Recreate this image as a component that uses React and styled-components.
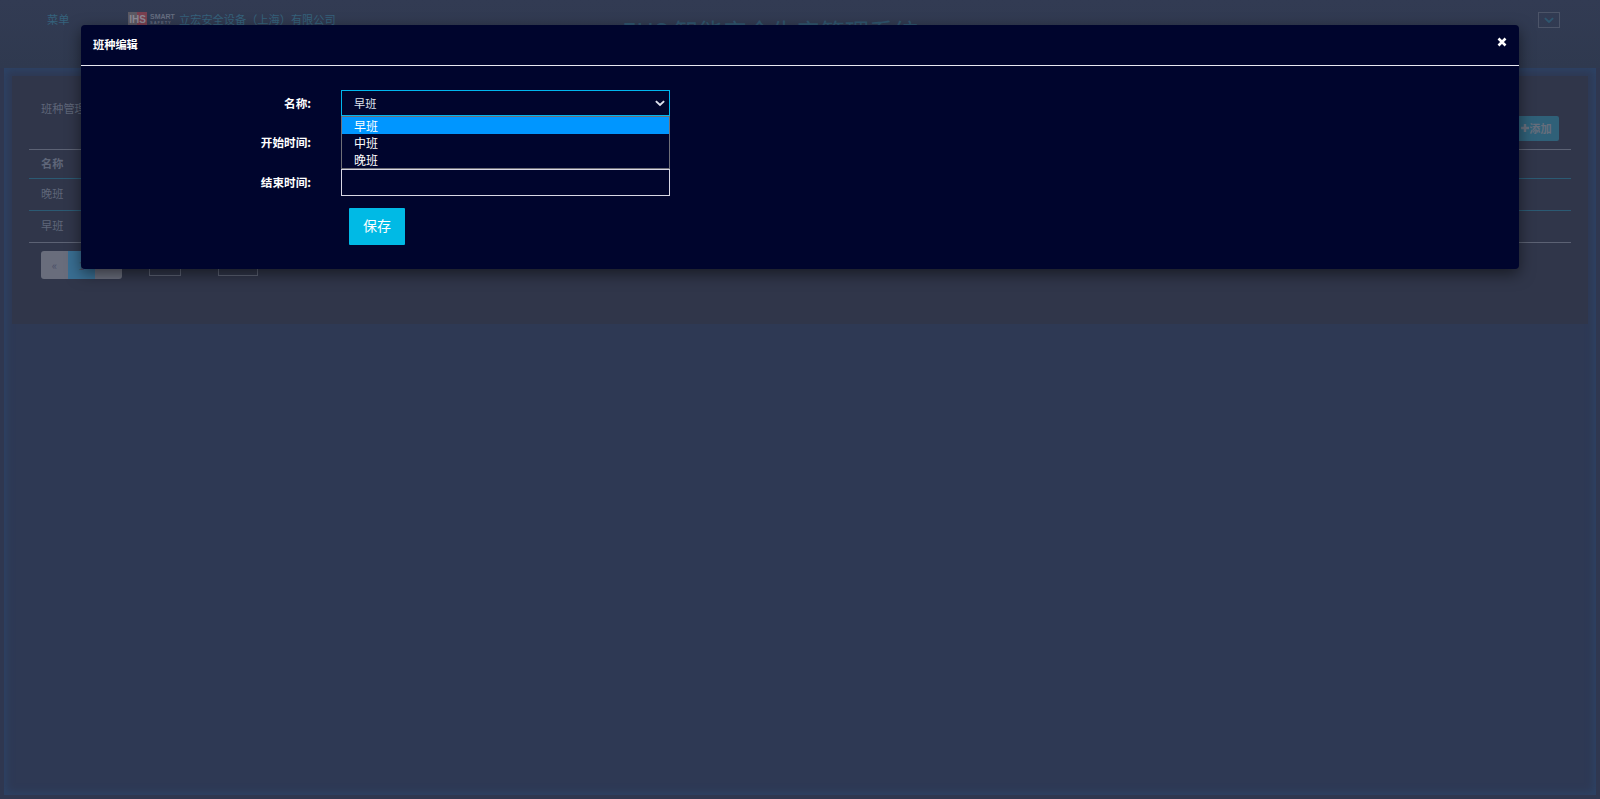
import styled, { createGlobalStyle } from "styled-components";

const GlobalStyle = createGlobalStyle`
  html, body {
    margin: 0;
    padding: 0;
    height: 100%;
    overflow: hidden;
  }

  body {
    background: #2f3750;
    font-family: "Noto Sans CJK SC", "Liberation Sans", sans-serif;
    font-size: 11.2px;
  }
`;

const Page = styled.div`
  position: relative;
  height: 799px;
  display: flex;
  flex-direction: column;
`;

const TopBar = styled.header`
  height: 68px;
  flex: none;
  display: flex;
  align-items: flex-start;
  padding: 11px 40px 0 47px;
  box-sizing: border-box;
  background: linear-gradient(#323b53, #2f394f);
  color: #35627c;
`;

const MenuLink = styled.a`
  width: 81px;
  line-height: 17px;
`;

const Logo = styled.div`
  display: flex;
  align-items: flex-start;
  gap: 3px;
  height: 16px;
  width: 51px;
  margin-top: 1px;
`;

const LogoMark = styled.span`
  width: 19px;
  height: 16px;
  background: linear-gradient(90deg, #5c5a64 50%, #7a4050 50%);
  color: #8d8a96;
  font: bold 10px/16px "Liberation Sans", sans-serif;
  text-align: center;
`;

const LogoWords = styled.span`
  display: flex;
  flex-direction: column;
  width: 26px;
  padding-top: 1px;
  font: bold 7px/7px "Liberation Sans", sans-serif;
  color: #656d80;
`;

const LogoSubWord = styled.span`
  font-size: 4px;
  line-height: 5px;
  letter-spacing: 1px;
`;

const Company = styled.span`
  width: 443px;
  line-height: 17px;
  white-space: nowrap;
`;

const SystemName = styled.h1`
  margin: 2px 0 0;
  width: 916px;
  font-size: 24.4px;
  font-weight: 400;
  line-height: 36px;
  color: #2f566f;
  white-space: nowrap;
`;

const ToggleBox = styled.button`
  width: 22px;
  height: 16px;
  margin-top: 1px;
  padding: 0;
  display: flex;
  align-items: center;
  justify-content: center;
  background: none;
  border: 1px solid #4c5468;
`;

const Frame = styled.main`
  flex: 1;
  margin: 0 4px 4px;
  padding: 8px;
  background: #2e3954;
  box-shadow: inset 0 0 8px 2px #2d4468;
`;

const Panel = styled.section`
  height: 248px;
  box-sizing: border-box;
  padding: 23px 17px 0;
  background: #30364a;
  color: #5f6679;
`;

const PanelHead = styled.div`
  display: flex;
  justify-content: space-between;
  padding: 0 12px;
  height: 50px;
  line-height: 18px;
`;

const AddButton = styled.button`
  width: 50px;
  height: 25px;
  margin-top: 17px;
  padding: 0 0 2px 5px;
  display: flex;
  align-items: center;
  justify-content: center;
  border: 0;
  border-radius: 2px;
  background: #2f6078;
  color: #666e7c;
  font: bold 11.2px "Noto Sans CJK SC", sans-serif;
`;

const Table = styled.div`
  border-top: 1px solid #5c6274;
  border-bottom: 1px solid #5c6274;
`;

const TableRow = styled.div`
  height: ${(p) => (p.$head ? 28 : 31)}px;
  padding-left: 12px;
  line-height: ${(p) => (p.$head ? 26 : 29)}px;
  font-weight: ${(p) => (p.$head ? 700 : 400)};
  border-bottom: 1px solid #2b5a73;

  &:last-child {
    border-bottom: 0;
  }
`;

const Pager = styled.div`
  display: flex;
  align-items: flex-end;
  margin: 8px 0 0 12px;
`;

const PageButtons = styled.div`
  display: flex;
  width: 81px;
  height: 28px;
  border-radius: 3px;
  overflow: hidden;
`;

const PageButton = styled.span`
  flex: 1;
  text-align: center;
  line-height: 28px;
  background: ${(p) => (p.$active ? "#396e92" : "#696d7c")};
  color: #4a4f68;
`;

const PagerInput = styled.span`
  display: block;
  width: ${(p) => p.$width}px;
  height: 24px;
  box-sizing: border-box;
  margin-bottom: 3px;
  border: 1px solid #5c6274;
`;

const PagerText = styled.span`
  width: ${(p) => p.$width}px;
  margin-bottom: 7px;
  text-align: center;
  line-height: 18px;
  color: #2c5a72;
  white-space: nowrap;
`;

const Dialog = styled.div`
  position: absolute;
  left: 81px;
  top: 25px;
  width: 1438px;
  height: 244px;
  border-radius: 4px;
  background: #00052d;
  box-shadow: 0 5px 15px rgba(0, 0, 0, 0.5);
  color: #fff;
`;

const DialogHead = styled.div`
  height: 40px;
  display: flex;
  justify-content: space-between;
  padding: 0 12px;
  border-bottom: 1px solid #e8e8f0;
`;

const DialogTitle = styled.h4`
  margin: 0;
  font-size: 11.2px;
  line-height: 38px;
`;

const CloseButton = styled.button`
  height: 34px;
  padding: 0;
  background: none;
  border: 0;
  display: flex;
  align-items: center;
`;

const Form = styled.form`
  display: flex;
  flex-direction: column;
  gap: 13px;
  padding-top: 24px;
`;

const Field = styled.div`
  display: flex;
  align-items: center;
  position: relative;
`;

const Label = styled.label`
  width: 230px;
  margin-right: 30px;
  padding-bottom: ${(p) => (p.$select ? 0 : 2)}px;
  text-align: right;
  font-size: 11.6px;
  font-weight: 700;
`;

const SelectBox = styled.div`
  width: 329px;
  height: 26px;
  box-sizing: border-box;
  padding: 0 3px 0 12px;
  display: flex;
  align-items: center;
  justify-content: space-between;
  border: 1px solid #00b7ee;
  color: #dfe3ee;
`;

const TextInput = styled.input`
  width: 329px;
  height: 27px;
  box-sizing: border-box;
  border: 1px solid #d8d8e4;
  background: transparent;
`;

const OptionList = styled.ul`
  position: absolute;
  left: 260px;
  top: 26px;
  width: 329px;
  box-sizing: border-box;
  margin: 0;
  padding: 0;
  list-style: none;
  background: #00052d;
  border: 1px solid #6f7078;
  z-index: 2;
`;

const Option = styled.li`
  height: 17px;
  padding-left: 12px;
  line-height: 17px;
  font-size: 12px;
  background: ${(p) => (p.$selected ? "#0096ff" : "transparent")};
`;

const SaveButton = styled.button`
  align-self: flex-start;
  width: 56px;
  height: 37px;
  margin: -1px 0 0 268px;
  padding: 0 0 3px;
  border: 0;
  border-radius: 1px;
  background: #00bae5;
  color: #fff;
  font: 14px "Noto Sans CJK SC", sans-serif;
`;

const Chevron = ({ color, size }) => (
  <svg width={size} height={size} viewBox="0 0 16 16" fill="none">
    <path d="M2.5 5.5 8 10.5 13.5 5.5" stroke={color} strokeWidth="2.6" />
  </svg>
);

const shiftNames = ["早班", "中班", "晚班"];

export default function App() {
  return (
    <Page>
      <GlobalStyle />
      <TopBar>
        <MenuLink>菜单</MenuLink>
        <Logo>
          <LogoMark>IHS</LogoMark>
          <LogoWords>
            SMART
            <LogoSubWord>SAFETY</LogoSubWord>
          </LogoWords>
        </Logo>
        <Company>立宏安全设备（上海）有限公司</Company>
        <SystemName>EHS 智能安全生产管理系统</SystemName>
        <ToggleBox>
          <Chevron color="#2f566f" size={12} />
        </ToggleBox>
      </TopBar>
      <Frame>
        <Panel>
          <PanelHead>
            <span>班种管理</span>
            <AddButton>
              <svg width="8" height="8" viewBox="0 0 8 8">
                <path d="M4 0V8M0 4H8" stroke="#666e7c" strokeWidth="2.4" />
              </svg>
              添加
            </AddButton>
          </PanelHead>
          <Table>
            <TableRow $head>名称</TableRow>
            <TableRow>晚班</TableRow>
            <TableRow>早班</TableRow>
          </Table>
          <Pager>
            <PageButtons>
              <PageButton>«</PageButton>
              <PageButton $active>1</PageButton>
              <PageButton>»</PageButton>
            </PageButtons>
            <PagerText $width={27}>每页</PagerText>
            <PagerInput $width={32} />
            <PagerText $width={37}>条，到第</PagerText>
            <PagerInput $width={40} />
            <PagerText $width={60}>页 共1页</PagerText>
          </Pager>
        </Panel>
      </Frame>
      <Dialog>
        <DialogHead>
          <DialogTitle>班种编辑</DialogTitle>
          <CloseButton aria-label="关闭">
            <svg width="10" height="10" viewBox="0 0 10 10">
              <path d="M1.5 1.5 8.5 8.5M8.5 1.5 1.5 8.5" stroke="#fff" strokeWidth="2.6" />
            </svg>
          </CloseButton>
        </DialogHead>
        <Form>
          <Field>
            <Label $select>名称:</Label>
            <SelectBox>
              早班
              <Chevron color="#dfe3ee" size={12} />
            </SelectBox>
            <OptionList>
              {shiftNames.map((name, i) => (
                <Option key={name} $selected={i === 0}>
                  {name}
                </Option>
              ))}
            </OptionList>
          </Field>
          <Field>
            <Label>开始时间:</Label>
            <TextInput />
          </Field>
          <Field>
            <Label>结束时间:</Label>
            <TextInput />
          </Field>
          <SaveButton type="button">保存</SaveButton>
        </Form>
      </Dialog>
    </Page>
  );
}
